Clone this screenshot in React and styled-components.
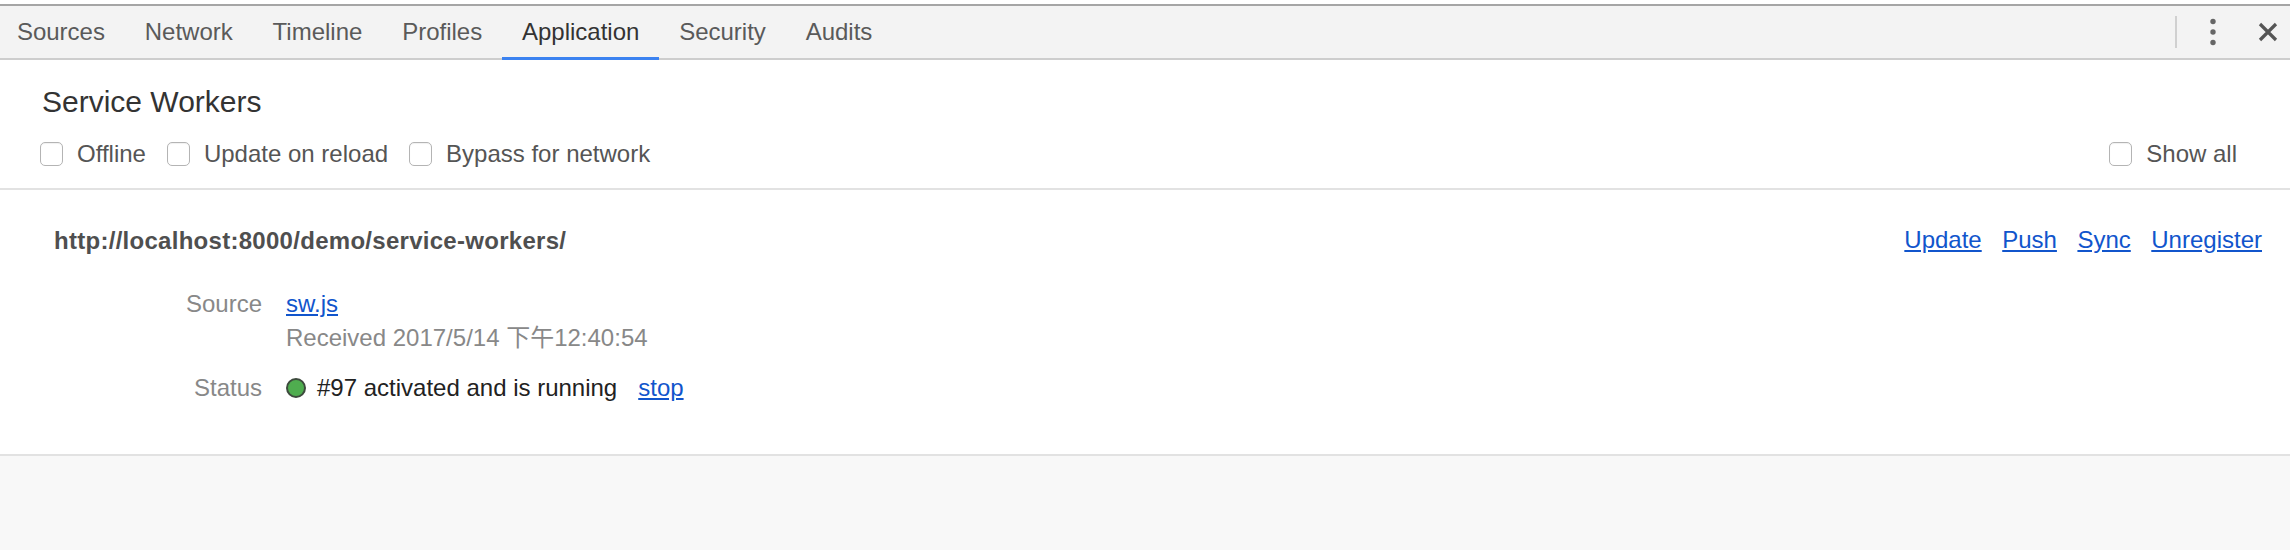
import React from 'react';
import styled, { createGlobalStyle } from 'styled-components';

const GlobalStyle = createGlobalStyle`
  html, body {
    margin: 0;
    padding: 0;
    background: #f8f8f8;
  }
  body {
    font-family: "Liberation Sans", "Noto Sans CJK TC", Arial, sans-serif;
    -webkit-font-smoothing: antialiased;
  }
`;

const Page = styled.div`
  display: flex;
  flex-direction: column;
  padding-top: 4px;
  background: #ffffff;
`;

const Toolbar = styled.div`
  display: flex;
  align-items: stretch;
  height: 52px;
  background: #f3f3f3;
  border-top: 2px solid #a5a5a5;
  border-bottom: 2px solid #cdcdcd;
`;

const Tabs = styled.div`
  display: flex;
  align-items: stretch;
  margin-left: -3px;
`;

const Tab = styled.div`
  position: relative;
  display: flex;
  align-items: center;
  padding: 0 19.9px;
  font-size: 24px;
  color: ${(p) => (p.$active ? '#333333' : '#5a5a5a')};

  &::after {
    content: '';
    display: ${(p) => (p.$active ? 'block' : 'none')};
    position: absolute;
    left: 0;
    right: 0;
    bottom: -2px;
    height: 3px;
    background: #3b82f0;
  }
`;

const Spacer = styled.div`
  flex: 1;
`;

const ToolActions = styled.div`
  display: flex;
  align-items: center;
  padding-right: 12px;
`;

const Divider = styled.div`
  width: 2px;
  height: 32px;
  background: #d0d0d0;
  margin-right: 18px;
`;

const IconBox = styled.div`
  display: flex;
  align-items: center;
  justify-content: center;
  width: ${(p) => p.$w}px;
  margin-right: ${(p) => p.$mr || 0}px;
`;

const Header = styled.div`
  display: flex;
  flex-direction: column;
  padding: 24px 53px 20px 42px;
  border-bottom: 2px solid #e2e2e2;
`;

const Title = styled.div`
  font-size: 30px;
  line-height: 36px;
  color: #333333;
`;

const OptionsRow = styled.div`
  display: flex;
  justify-content: space-between;
  align-items: center;
  margin-top: 20px;
  margin-left: -2px;
`;

const OptionGroup = styled.div`
  display: flex;
  align-items: center;
  gap: 21px;
`;

const Option = styled.label`
  display: flex;
  align-items: center;
  gap: 14px;
  font-size: 24px;
  line-height: 28px;
  color: #555555;
`;

const Box = styled.span`
  display: inline-block;
  box-sizing: border-box;
  width: 23px;
  height: 24px;
  border: 1.5px solid #b4b4b4;
  border-radius: 5px;
  background: #ffffff;
  box-shadow: inset 0 1px 1px rgba(0, 0, 0, 0.06);
`;

const Worker = styled.div`
  display: flex;
  flex-direction: column;
  padding: 37px 28px 49px 54px;
  border-bottom: 2px solid #e2e2e2;
`;

const WorkerTop = styled.div`
  display: flex;
  justify-content: space-between;
  align-items: center;
  line-height: 28px;
`;

const Scope = styled.div`
  font-size: 24px;
  font-weight: bold;
  letter-spacing: 0.28px;
  color: #4f4f4f;
`;

const Links = styled.div`
  display: flex;
  gap: 20.5px;
  margin-top: -3px;
`;

const Link = styled.a`
  font-size: 24px;
  color: #1155cc;
  text-decoration: underline;
  cursor: pointer;
`;

const Details = styled.div`
  display: grid;
  grid-template-columns: 208px 1fr;
  column-gap: 24px;
  row-gap: 16px;
  margin-top: 32px;
  font-size: 24px;
  line-height: 34px;
`;

const Label = styled.div`
  text-align: right;
  color: #888888;
`;

const Value = styled.div`
  display: flex;
  flex-direction: column;
`;

const Muted = styled.div`
  color: #888888;
`;

const StatusLine = styled.div`
  display: flex;
  align-items: center;
  color: #222222;
`;

const Dot = styled.span`
  box-sizing: border-box;
  width: 20px;
  height: 20px;
  border-radius: 50%;
  background: #4fad4f;
  border: 2px solid #3d4a3d;
  margin-right: 11px;
`;

const StopLink = styled(Link)`
  margin-left: 21px;
`;

const Rest = styled.div`
  flex: 1;
  height: 94px;
  background: #f8f8f8;
`;

const tabs = ['Sources', 'Network', 'Timeline', 'Profiles', 'Application', 'Security', 'Audits'];

const App = () => {
  return (
    <Page>
      <GlobalStyle />
      <Toolbar>
        <Tabs>
          {tabs.map((t) => (
            <Tab key={t} $active={t === 'Application'}>{t}</Tab>
          ))}
        </Tabs>
        <Spacer />
        <ToolActions>
          <Divider />
          <IconBox $w={36} $mr={27}>
            <svg width="36" height="32" viewBox="0 0 36 32">
              <circle cx="18" cy="5.5" r="2.7" fill="#666" />
              <circle cx="18" cy="16" r="2.7" fill="#666" />
              <circle cx="18" cy="26.5" r="2.7" fill="#666" />
            </svg>
          </IconBox>
          <IconBox $w={20}>
            <svg width="20" height="20" viewBox="0 0 20 20">
              <path d="M2 2 L18 18 M18 2 L2 18" stroke="#555" strokeWidth="3.2" strokeLinecap="butt" />
            </svg>
          </IconBox>
        </ToolActions>
      </Toolbar>

      <Header>
        <Title>Service Workers</Title>
        <OptionsRow>
          <OptionGroup>
            <Option><Box />Offline</Option>
            <Option><Box />Update on reload</Option>
            <Option><Box />Bypass for network</Option>
          </OptionGroup>
          <Option><Box />Show all</Option>
        </OptionsRow>
      </Header>

      <Worker>
        <WorkerTop>
          <Scope>http://localhost:8000/demo/service-workers/</Scope>
          <Links>
            <Link>Update</Link>
            <Link>Push</Link>
            <Link>Sync</Link>
            <Link>Unregister</Link>
          </Links>
        </WorkerTop>
        <Details>
          <Label>Source</Label>
          <Value>
            <div><Link>sw.js</Link></div>
            <Muted>Received 2017/5/14 下午12:40:54</Muted>
          </Value>
          <Label>Status</Label>
          <StatusLine>
            <Dot />
            #97 activated and is running
            <StopLink>stop</StopLink>
          </StatusLine>
        </Details>
      </Worker>

      <Rest />
    </Page>
  );
};

export default App;
